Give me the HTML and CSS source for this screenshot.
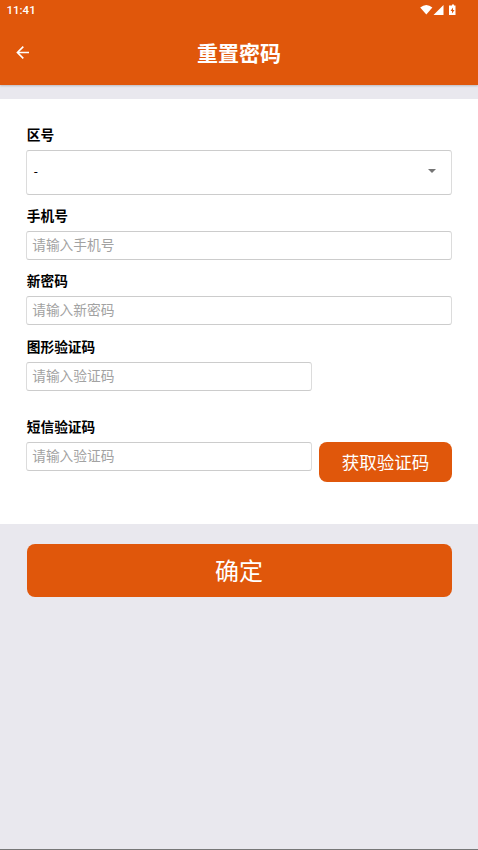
FILE: index.html
```html
<!DOCTYPE html>
<html lang="zh-CN">
<head>
<meta charset="utf-8">
<title>重置密码</title>
<link rel="stylesheet" href="styles.css">
</head>
<body>
<header class="top">
  <div class="status">
    <span>11:41</span>
    <svg class="status-icons" width="38" height="12" viewBox="0 0 38 12" fill="#fff"><path d="M.2 3.500Q6.300-1.700 12.400 3.500L6.300 10.500Z"/><path d="M23.500 1v10h-10z"/><path fill-rule="evenodd" d="M31 1.500h1V.5h2v1h1.500V11H29V1.500zM33 3.500 30.500 7H32v2.500L34.500 6H33z"/></svg>
  </div>
  <div class="bar">
    <svg class="back" width="14" height="14" viewBox="0 0 14 14" fill="none" stroke="#fff" stroke-width="1.600"><path d="M13 6.500H1.500M7.300 .6 1.400 6.500 7.300 12.400"/></svg>
    <h1>重置密码</h1>
  </div>
</header>
<main>
  <form class="panel">
    <label class="label">区号</label>
    <div class="select"><span>-</span><svg width="8" height="4" viewBox="0 0 8 4"><path d="M0 0h8L4 4z" fill="#757575"/></svg></div>
    <label class="label">手机号</label>
    <div class="input">请输入手机号</div>
    <label class="label">新密码</label>
    <div class="input">请输入新密码</div>
    <label class="label">图形验证码</label>
    <div class="input short">请输入验证码</div>
    <label class="label sms">短信验证码</label>
    <div class="row"><div class="input short">请输入验证码</div><button type="button" class="get">获取验证码</button></div>
  </form>
  <button type="button" class="submit">确定</button>
</main>
</body>
</html>
```
FILE: styles.css
```css
* { box-sizing: border-box; }
body { margin: 0; min-height: 850px; background: #e9e8ee; border-bottom: 1px solid #777; font-family: Roboto, "Noto Sans CJK SC", sans-serif; color: #000; }
.top { height: 85px; background: #e0570b; color: #fff; box-shadow: 0 1px 2px rgba(0,0,0,.2); }
.status { height: 20px; padding: 0 20px 0 6.500px; display: flex; align-items: center; justify-content: space-between; font-size: 11.500px; font-weight: 500; }
.status-icons { margin-top: -1px; }
.bar { height: 65px; padding: 0 16px; display: grid; grid-template-columns: 14px 1fr 14px; align-items: center; }
h1 { margin: 2px 0 0; text-align: center; font-size: 21px; line-height: 30px; font-weight: 700; }
.panel { margin-top: 14px; height: 425px; padding: 26px 26px 0; background: #fff; }
.label { display: block; height: 20px; margin-bottom: 5px; padding-left: .8px; font-size: 13.700px; line-height: 20px; font-weight: 700; }
.select, .input { border: 1px solid; border-color: #ccc #dcdcdc; border-radius: 3px; }
.select { height: 45px; margin-bottom: 11px; padding: 0 15px 3px 7px; display: flex; align-items: center; justify-content: space-between; font-size: 13px; }
.input { height: 29px; margin-bottom: 11.400px; padding-left: 5.200px; font-size: 13.700px; line-height: 27px; color: #a2a2a2; }
.short { width: 286px; }
.sms { margin-top: 26.200px; }
.row { display: flex; justify-content: space-between; }
button { border: 0; padding: 0; background: #e0570b; color: #fff; font-family: inherit; }
.get { width: 133px; height: 40px; border-radius: 8px; font-size: 17.500px; }
.submit { display: block; width: 425px; height: 53px; margin: 20px 0 0 26.500px; padding-bottom: 2px; border-radius: 8px; font-size: 24px; }
```
